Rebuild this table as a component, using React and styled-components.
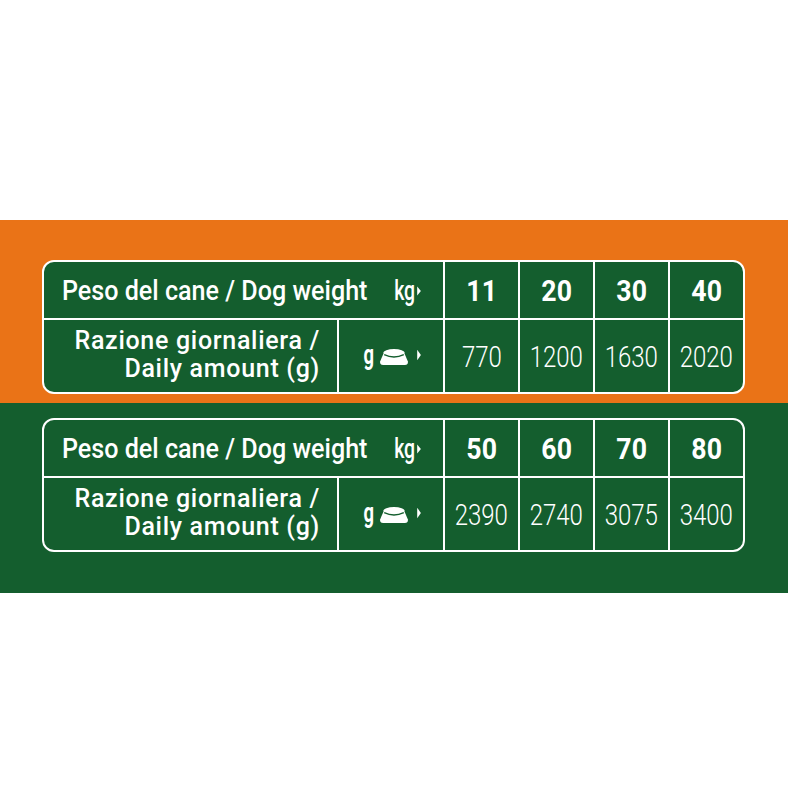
import React from 'react';
import styled, { createGlobalStyle } from 'styled-components';

const ORANGE = '#ea7317';
const GREEN = '#145e2e';

const GlobalStyle = createGlobalStyle`
  html, body {
    margin: 0;
    padding: 0;
    background: #ffffff;
  }
  body {
    font-family: Roboto, "Liberation Sans", sans-serif;
  }
`;

const bands = [
  {
    color: ORANGE,
    top: 40,
    bottom: 9,
    weights: [11, 20, 30, 40],
    amounts: [770, 1200, 1630, 2020],
  },
  {
    color: GREEN,
    top: 15,
    bottom: 41,
    weights: [50, 60, 70, 80],
    amounts: [2390, 2740, 3075, 3400],
  },
];

export default function App() {
  return (
    <Page>
      <GlobalStyle />
      {bands.map((band) => (
        <Band key={band.weights[0]} $color={band.color} $top={band.top} $bottom={band.bottom}>
          <Table>
            <WeightLabel>
              <Title $origin="left" $scale={0.93}>
                Peso del cane / Dog weight
              </Title>
              <Unit>
                <Narrow $origin="right" $scale={0.72}>
                  kg
                </Narrow>
                <Arrow />
              </Unit>
            </WeightLabel>
            {band.weights.map((w) => (
              <Value key={w} $bold>
                <Narrow $scale={0.92}>{w}</Narrow>
              </Value>
            ))}
            <AmountLabel>
              <span>Razione giornaliera /</span>
              <span>Daily amount (g)</span>
            </AmountLabel>
            <UnitCell>
              <Unit $small>
                <Narrow $scale={0.68}>g</Narrow>
                <Bowl />
                <Arrow $tall />
              </Unit>
            </UnitCell>
            {band.amounts.map((a) => (
              <Value key={a}>
                <Narrow $scale={0.8}>{a}</Narrow>
              </Value>
            ))}
          </Table>
        </Band>
      ))}
    </Page>
  );
}

function Arrow({ $tall }) {
  return (
    <ArrowSvg viewBox="0 0 4 10" preserveAspectRatio="none" $tall={$tall} aria-hidden="true">
      <path d="M0.2 0.6 L3.9 5 L0.2 9.4 Z" fill="#ffffff" />
    </ArrowSvg>
  );
}

function Bowl() {
  return (
    <BowlSvg viewBox="0 0 30 16" aria-hidden="true">
      <path
        d="M4.3 5 L1.2 12.3 Q0.4 16 4.2 16 L25.8 16 Q29.6 16 28.8 12.3 L25.7 5 Z"
        fill="#ffffff"
      />
      <ellipse cx="15" cy="4.1" rx="10.8" ry="4" fill="#ffffff" />
      <path d="M5.2 5.6 Q15 10.4 24.8 5.6" stroke={GREEN} strokeWidth="1.4" fill="none" />
    </BowlSvg>
  );
}

const Page = styled.div`
  width: 800px;
  height: 800px;
  padding-top: 220px;
  box-sizing: border-box;
`;

const Band = styled.div`
  width: 788px;
  background: ${(p) => p.$color};
  padding: ${(p) => p.$top}px 0 ${(p) => p.$bottom}px 42px;
  box-sizing: border-box;
`;

const Table = styled.div`
  display: grid;
  grid-template-columns: 293px 104px repeat(4, 73px);
  grid-template-rows: 56px 72px;
  gap: 2px;
  width: 703px;
  box-sizing: border-box;
  border: 2px solid #ffffff;
  border-radius: 12px;
  background: #ffffff;
  overflow: hidden;
  color: #ffffff;
`;

const Cell = styled.div`
  background: ${GREEN};
  display: flex;
  align-items: center;
  white-space: nowrap;
`;

/* the print uses a condensed face; squeeze Roboto horizontally */
const Narrow = styled.span`
  display: inline-block;
  transform: scaleX(${(p) => p.$scale || 0.8});
  transform-origin: ${(p) => p.$origin || 'center'};
`;

const Title = styled(Narrow)`
  flex: 1;
  min-width: 0;
`;

const WeightLabel = styled(Cell)`
  grid-column: span 2;
  padding: 2px 22px 0 18px;
  font-size: 27px;
  font-weight: 500;
`;

const Unit = styled.span`
  display: inline-flex;
  align-items: center;
  font-size: 27px;
  font-weight: ${(p) => (p.$small ? 700 : 500)};
`;

const AmountLabel = styled(Cell)`
  flex-direction: column;
  align-items: flex-end;
  justify-content: center;
  padding: 0 17px 3px 0;
  font-size: 25px;
  font-weight: 500;
  letter-spacing: 0.7px;
  line-height: 28px;
`;

const UnitCell = styled(Cell)`
  justify-content: center;
  padding-bottom: 2px;
`;

const Value = styled(Cell)`
  justify-content: center;
  padding-top: ${(p) => (p.$bold ? 2 : 0)}px;
  font-size: ${(p) => (p.$bold ? 29 : 30)}px;
  font-weight: ${(p) => (p.$bold ? 700 : 300)};
`;

const ArrowSvg = styled.svg`
  width: 4px;
  height: ${(p) => (p.$tall ? 12 : 10)}px;
  margin-left: 2px;
`;

const BowlSvg = styled.svg`
  width: 30px;
  height: 16px;
  margin: 3px 6px 0 3px;
`;
